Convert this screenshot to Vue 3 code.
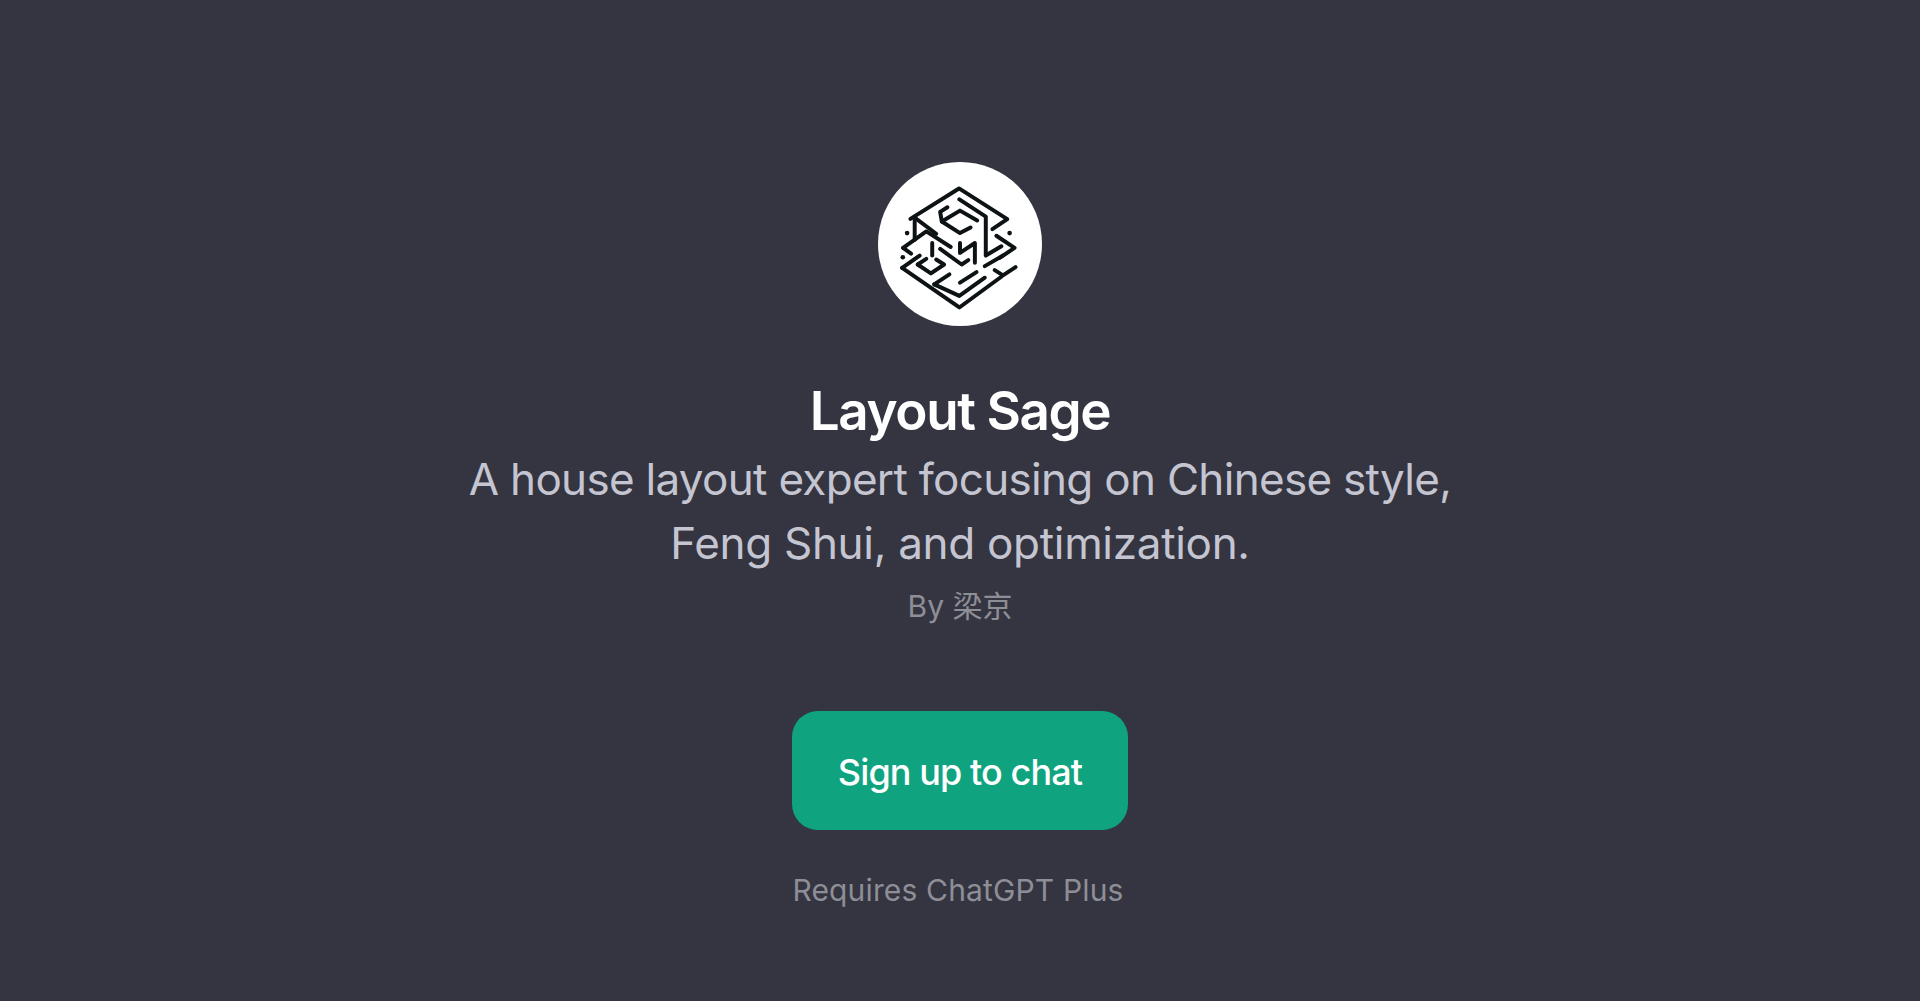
<script setup>
// Maze logo strokes, in the coordinates of a 600x570 crop of the logo area
const mazeLines = [
  'M150 207 L297 115 L443 208 L398 238',
  'M298 148 L378 200 L378 315',
  'M165 205 L228 252',
  'M163 207 L163 270',
  'M262 172 L240 186 L245 215 L300 250 L332 233',
  'M245 215 L300 182 L352 212',
  'M128 295 L198 245 L272 292',
  'M128 295 L152 312',
  'M216 280 L216 318',
  'M172 345 L212 372 L252 345 L228 330',
  'M172 345 L198 328',
  'M240 298 L305 345 L325 332',
  'M300 280 L300 310 L345 280 L345 340',
  'M410 258 L465 295 L420 325',
  'M378 318 L425 290',
  'M375 350 L430 318',
  'M125 355 L178 318',
  'M125 355 L298 475 L425 382',
  'M405 362 L430 378 L468 353',
  'M222 405 L268 375',
  'M222 405 L298 440 L375 385',
  'M300 400 L350 368',
]
</script>

<template>
  <div class="page">
    <div class="logo">
      <svg viewBox="52 35 496 496" width="164" height="164" fill="none" stroke="#0d1214" stroke-width="12" stroke-linecap="round" stroke-linejoin="round">
        <path v-for="(d, i) in mazeLines" :key="i" :d="d" />
        <circle cx="140" cy="250" r="7" fill="#0d1214" stroke="none" />
        <circle cx="450" cy="250" r="7" fill="#0d1214" stroke="none" />
        <circle cx="127" cy="323" r="7" fill="#0d1214" stroke="none" />
      </svg>
    </div>
    <h1 class="title">Layout Sage</h1>
    <p class="desc">A house layout expert focusing on Chinese style,<br><span class="desc-end">Feng Shui, and optimization.</span></p>
    <p class="author">By 梁京</p>
    <button class="signup">Sign up to chat</button>
    <p class="note">Requires ChatGPT Plus</p>
  </div>
</template>

<style>
body {
  background: #343541;
}
</style>

<style scoped>
.page {
  display: flex;
  flex-direction: column;
  align-items: center;
  height: 1001px;
  box-sizing: border-box;
  padding-top: 162px;
  background: #343541;
  font-family: Inter, "Noto Sans CJK SC", sans-serif;
  text-align: center;
}

.logo {
  width: 164px;
  height: 164px;
  border-radius: 50%;
  background: #fff;
  display: flex;
  align-items: center;
  justify-content: center;
}

.title {
  margin: 55px 0 0;
  font-size: 53px;
  line-height: 60px;
  font-weight: 600;
  letter-spacing: -1.4px;
  color: #fff;
}

.desc {
  margin: 6px 0 0;
  font-size: 44px;
  line-height: 64px;
  color: #c5c5d2;
  letter-spacing: -0.7px;
}

.desc-end {
  letter-spacing: -0.3px;
}

.author {
  margin: 12px 0 0;
  font-size: 30px;
  line-height: 38px;
  color: #8e8e96;
}

.signup {
  margin-top: 86px;
  width: 336px;
  height: 119px;
  padding: 2px 0 0;
  border: none;
  border-radius: 26px;
  background: #10a37f;
  color: #fff;
  font-family: inherit;
  font-size: 36px;
  font-weight: 500;
  letter-spacing: -0.9px;
}

.note {
  margin: 41px 4px 0 0;
  font-size: 30px;
  line-height: 38px;
  letter-spacing: 0.15px;
  color: #8e8e96;
}
</style>
